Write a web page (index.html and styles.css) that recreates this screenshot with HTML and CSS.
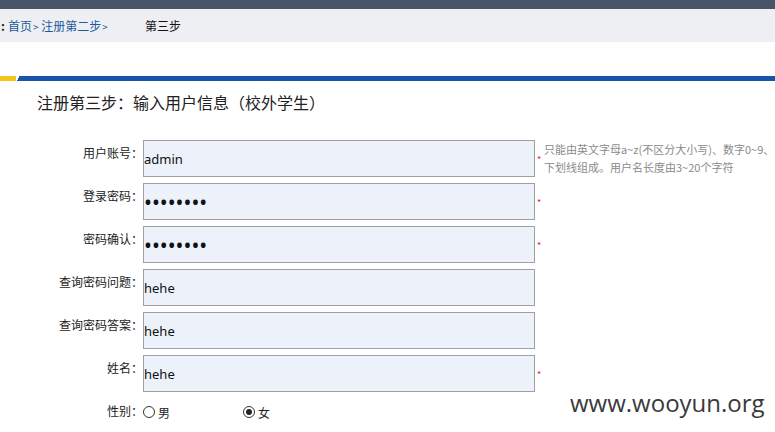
FILE: index.html
```html
<!DOCTYPE html>
<html lang="zh-CN">
<head>
    <meta charset="UTF-8">
    <title>注册第三步</title>
    <link rel="stylesheet" href="styles.css">
</head>
<body>

<div class="topbar"></div>
<div class="crumbs">
    <span class="crumb-path"><b>:</b><a href="#">首页</a><i>&gt;</i> <a href="#">注册第二步</a><i>&gt;</i></span>
    <span class="crumb-now">第三步</span>
</div>

<div class="stripe"><span class="stripe-yellow"></span><span class="stripe-blue"></span></div>

<h2 class="title">注册第三步：输入用户信息（校外学生）</h2>

<!-- 用户信息表单 -->
<form class="regform">
    <label class="lbl">用户账号：</label>
    <input class="box" type="text" value="admin">
    <span class="req">*</span>
    <span class="hint">只能由英文字母a~z(不区分大小写)、数字0~9、<br>下划线组成。用户名长度由3~20个字符</span>

    <label class="lbl">登录密码：</label>
    <input class="box pwd" type="password" value="12345678">
    <span class="req">*</span>
    <span></span>

    <label class="lbl">密码确认：</label>
    <input class="box pwd" type="password" value="12345678">
    <span class="req">*</span>
    <span></span>

    <label class="lbl">查询密码问题：</label>
    <input class="box" type="text" value="hehe">
    <span></span>
    <span></span>

    <label class="lbl">查询密码答案：</label>
    <input class="box" type="text" value="hehe">
    <span></span>
    <span></span>

    <label class="lbl">姓名：</label>
    <input class="box" type="text" value="hehe">
    <span class="req">*</span>
    <span></span>

    <label class="lbl lbl-short">性别：</label>
    <div class="sex">
        <label class="opt"><span class="radio"></span>男</label>
        <label class="opt"><span class="radio on"></span>女</label>
    </div>
    <span></span>
    <span></span>
</form>

<div class="mark">www.wooyun.org</div>

</body>
</html>
```

FILE: styles.css
```css
body {
    margin: 0;
    font-family: "Noto Sans CJK SC", "Noto Sans", sans-serif;
    font-size: 12px;
    color: #222;
    background: #fff;
    overflow: hidden;
}
.topbar {
    height: 9px;
    background-color: #485568;
}
.crumbs {
    height: 33px;
    background-color: #eeeff2;
    display: flex;
    align-items: center;
    font-size: 12px;
    white-space: nowrap;
}
.crumb-path {
    margin-left: 1px;
    width: 144px;
    color: #1c5a9c;
}
.crumb-path b {
    color: #222;
    margin-right: 3px;
}
.crumb-path a {
    color: #1c5a9c;
    text-decoration: none;
}
.crumb-path i {
    font-style: normal;
    font-size: 10px;
    margin-left: 1px;
}
.crumb-now {
    color: #111;
}
.stripe {
    display: flex;
    height: 5px;
    margin-top: 34px;
}
.stripe-yellow {
    width: 16px;
    background-color: #f2c41c;
}
.stripe-blue {
    flex: 1;
    background: linear-gradient(115deg, #fff 0 3px, #1853ad 3px);
}
.title {
    margin: 10px 0 0 37px;
    font-size: 16px;
    font-weight: normal;
    color: #222;
    line-height: 22px;
}
.regform {
    display: grid;
    grid-template-columns: 143px 392px 9px 240px;
    row-gap: 6px;
    margin-top: 27px;
}
.lbl {
    text-align: right;
    align-self: center;
    padding-bottom: 12px;
    font-size: 12px;
    color: #222;
}
.lbl-short {
    padding-bottom: 0;
}
.box {
    height: 37px;
    box-sizing: border-box;
    margin: 0;
    padding: 1px 0 0 0;
    border: 1px solid #a0a0a0;
    background-color: #edf2fa;
    font-family: "Noto Sans", sans-serif;
    font-size: 13px;
    color: #111;
    outline: none;
}
.pwd {
    font-size: 21px;
    padding-top: 0;
}
.req {
    color: #d23;
    font-size: 9px;
    align-self: center;
    padding-left: 2px;
    padding-top: 2px;
}
.hint {
    font-size: 11px;
    line-height: 18px;
    color: #8a8a8a;
    padding-top: 0;
    white-space: nowrap;
}
.sex {
    display: flex;
    align-items: center;
    height: 22px;
    margin-top: 3px;
}
.opt {
    display: flex;
    align-items: center;
    gap: 3px;
    width: 100px;
    font-size: 12px;
}
.radio {
    width: 12px;
    height: 12px;
    border: 1px solid #333;
    border-radius: 50%;
    box-sizing: border-box;
    display: inline-block;
    position: relative;
}
.radio.on::after {
    content: "";
    position: absolute;
    left: 2px;
    top: 2px;
    width: 6px;
    height: 6px;
    border-radius: 50%;
    background-color: #222;
}
.mark {
    position: absolute;
    left: 570px;
    top: 386px;
    font-family: "Open Sans", sans-serif;
    font-size: 24px;
    color: #3a3a3a;
    background: rgba(255, 255, 255, 0.6);
}
```
